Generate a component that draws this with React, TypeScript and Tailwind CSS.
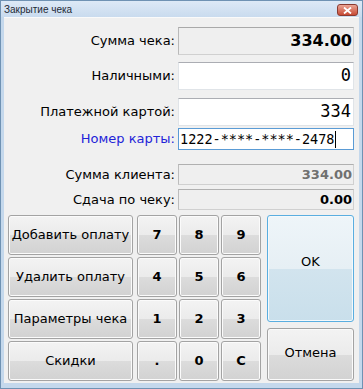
import React from "react";

const sans = "font-['DejaVu_Sans','Verdana',sans-serif]";
const mono = "font-['DejaVu_Sans_Mono','Liberation_Mono',monospace]";

const btn =
  "flex items-center justify-center rounded-[3px] border border-[#a3a3a3] bg-[linear-gradient(to_bottom,#f3f3f3_0%,#ebebeb_50%,#dcdcdc_50%,#d2d2d2_100%)] shadow-[inset_0_0_0_1px_#fbfbfb] text-[13px] text-black";

function Label({ children, blue }: { children: React.ReactNode; blue?: boolean }) {
  return (
    <div
      className={`w-[172px] pr-[3px] text-right text-[13px] ${blue ? "text-[#2323d8]" : "text-black"}`}
    >
      {children}
    </div>
  );
}

export default function App() {
  const left = ["Добавить оплату", "Удалить оплату", "Параметры чека", "Скидки"];
  const keys = ["7", "8", "9", "4", "5", "6", "1", "2", "3", ".", "0", "C"];

  return (
    <div className={`w-[363px] h-[389px] ${sans} bg-[#c4d8ec] border border-[#6f92b3] flex flex-col`}>
      {/* заголовок окна */}
      <div className="h-[16px] flex items-center justify-between pl-[3px] pr-[4px] bg-[linear-gradient(to_bottom,#dde9f6,#c9dbee)]">
        <span className="text-[10px] text-[#1e2a36] font-['Liberation_Sans',Arial,sans-serif] leading-none mt-[1px]">
          Закрытие чека
        </span>
        <div className="w-[21px] h-[12px] mt-[2px] rounded-[3px] border border-[#8a3a30] bg-[linear-gradient(to_bottom,#eba595,#c74a35)] flex items-center justify-center">
          <svg width="9" height="7" viewBox="0 0 9 7">
            <path d="M1 0.5 L8 6.5 M8 0.5 L1 6.5" stroke="#fff" strokeWidth="1.8" />
          </svg>
        </div>
      </div>

      {/* клиентская область */}
      <div className="flex-1 mx-[3px] mb-[5px] bg-[#f0f0f0] border-t border-[#fafafa] flex flex-col pl-[2px] pr-[3px] pt-[9px]">
        <div className="flex items-center h-[28px]">
          <Label>Сумма чека:</Label>
          <div className="w-[176px] h-[28px] border border-[#d0d0d0] border-t-[#a9a9a9] border-l-[#b9b9b9] bg-[#efefef] flex items-center justify-end pr-[1px] text-[16px] font-bold">
            334.00
          </div>
        </div>

        <div className="flex items-center h-[28px] mt-[7px]">
          <Label>Наличными:</Label>
          <div className={`w-[176px] h-[28px] border border-[#e0e4e8] border-t-[#abadb3] bg-white flex items-center justify-end pr-[2px] text-[17px] ${mono}`}>
            0
          </div>
        </div>

        <div className="flex items-center h-[28px] mt-[8px]">
          <Label>Платежной картой:</Label>
          <div className={`w-[176px] h-[28px] border border-[#e0e4e8] border-t-[#abadb3] bg-white flex items-center justify-end pr-[2px] text-[17px] ${mono}`}>
            334
          </div>
        </div>

        <div className="flex items-center h-[22px] mt-[2px]">
          <Label blue>Номер карты:</Label>
          <div className={`w-[176px] h-[22px] border border-[#5a9bd5] bg-white flex items-center pl-[1px] text-[13.5px] ${mono}`}>
            1222-****-****-2478
            <span className="w-px h-[17px] bg-black ml-[1px]"></span>
          </div>
        </div>

        <div className="flex items-center h-[21px] mt-[14px]">
          <Label>Сумма клиента:</Label>
          <div className="w-[176px] h-[21px] border border-[#d0d0d0] border-t-[#b0b0b0] border-l-[#bcbcbc] bg-[#efefef] flex items-center justify-end pr-[1px] text-[13px] font-bold text-[#707070]">
            334.00
          </div>
        </div>

        <div className="flex items-center h-[21px] mt-[4px]">
          <Label>Сдача по чеку:</Label>
          <div className="w-[176px] h-[21px] border border-[#d0d0d0] border-t-[#b0b0b0] border-l-[#bcbcbc] bg-[#efefef] flex items-center justify-end pr-[1px] text-[13px] font-bold">
            0.00
          </div>
        </div>

        {/* кнопки */}
        <div className="flex mt-[5px] pl-[2px]">
          <div className="w-[125px] flex flex-col gap-[2px]">
            {left.map((t) => (
              <div key={t} className={`${btn} h-[40px]`}>
                {t}
              </div>
            ))}
          </div>
          <div className="ml-[4px] grid grid-cols-[40px_40px_40px] grid-rows-[40px_40px_40px_40px] gap-[2px]">
            {keys.map((k) => (
              <div key={k} className={`${btn} font-bold`}>
                {k}
              </div>
            ))}
          </div>
          <div className="ml-[6px] w-[87px] flex flex-col gap-[6px]">
            <div className="h-[107px] rounded-[3px] border border-[#5aaee0] bg-[linear-gradient(to_bottom,#eef5f9_0%,#e6eff4_50%,#d2e4ee_50%,#c9dfeb_100%)] shadow-[inset_0_0_0_1px_#f4f9fc] flex items-center justify-center text-[13px] pb-[14px]">
              OK
            </div>
            <div className={`${btn} h-[53px] pb-[4px]`}>Отмена</div>
          </div>
        </div>
      </div>
    </div>
  );
}
